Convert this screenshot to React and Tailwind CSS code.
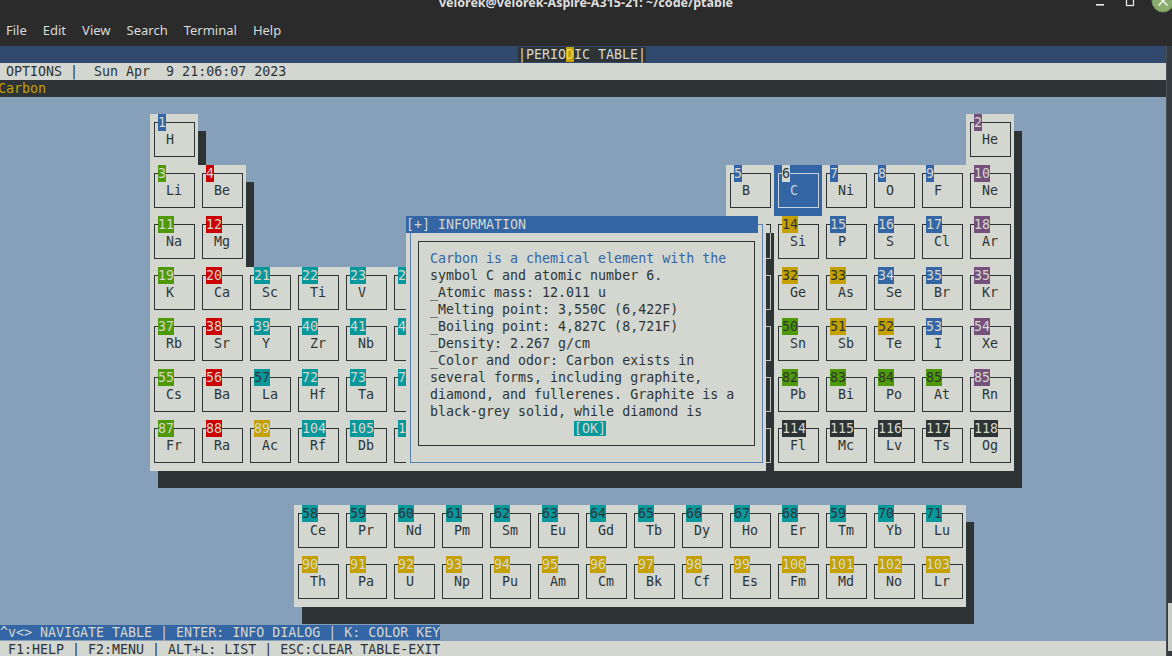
import React from "react";

const B = "#3465a4";
const G = "#4e9a06";
const R = "#cc0000";
const T = "#06989a";
const Y = "#c4a000";
const P = "#75507b";
const K = "#2e3436";
const L = "#d3d7cf";
const D = "#2e3436";

// [label, symbol, group, period, label bg, label text]
const table = [
  ["1", "H", 1, 1, B, L],
  ["2", "He", 18, 1, P, L],
  ["3", "Li", 1, 2, G, L],
  ["4", "Be", 2, 2, R, L],
  ["5", "B", 13, 2, B, L],
  ["7", "Ni", 15, 2, B, L],
  ["8", "O", 16, 2, B, L],
  ["9", "F", 17, 2, B, L],
  ["10", "Ne", 18, 2, P, L],
  ["11", "Na", 1, 3, G, L],
  ["12", "Mg", 2, 3, R, L],
  ["13", "Al", 13, 3, Y, D],
  ["14", "Si", 14, 3, Y, D],
  ["15", "P", 15, 3, B, L],
  ["16", "S", 16, 3, B, L],
  ["17", "Cl", 17, 3, B, L],
  ["18", "Ar", 18, 3, P, L],
  ["19", "K", 1, 4, G, L],
  ["20", "Ca", 2, 4, R, L],
  ["21", "Sc", 3, 4, T, L],
  ["22", "Ti", 4, 4, T, L],
  ["23", "V", 5, 4, T, L],
  ["24", "Cr", 6, 4, T, L],
  ["31", "Ga", 13, 4, G, D],
  ["32", "Ge", 14, 4, Y, D],
  ["33", "As", 15, 4, Y, D],
  ["34", "Se", 16, 4, B, L],
  ["35", "Br", 17, 4, B, L],
  ["35", "Kr", 18, 4, P, L],
  ["37", "Rb", 1, 5, G, L],
  ["38", "Sr", 2, 5, R, L],
  ["39", "Y", 3, 5, T, L],
  ["40", "Zr", 4, 5, T, L],
  ["41", "Nb", 5, 5, T, L],
  ["42", "Mo", 6, 5, T, L],
  ["49", "In", 13, 5, G, D],
  ["50", "Sn", 14, 5, G, D],
  ["51", "Sb", 15, 5, Y, D],
  ["52", "Te", 16, 5, Y, D],
  ["53", "I", 17, 5, B, L],
  ["54", "Xe", 18, 5, P, L],
  ["55", "Cs", 1, 6, G, L],
  ["56", "Ba", 2, 6, R, L],
  ["57", "La", 3, 6, T, D],
  ["72", "Hf", 4, 6, T, L],
  ["73", "Ta", 5, 6, T, L],
  ["74", "W", 6, 6, T, L],
  ["81", "Tl", 13, 6, G, D],
  ["82", "Pb", 14, 6, G, D],
  ["83", "Bi", 15, 6, G, D],
  ["84", "Po", 16, 6, G, D],
  ["85", "At", 17, 6, G, D],
  ["85", "Rn", 18, 6, P, L],
  ["87", "Fr", 1, 7, G, L],
  ["88", "Ra", 2, 7, R, L],
  ["89", "Ac", 3, 7, Y, L],
  ["104", "Rf", 4, 7, T, L],
  ["105", "Db", 5, 7, T, L],
  ["106", "Sg", 6, 7, T, L],
  ["113", "Nh", 13, 7, K, L],
  ["114", "Fl", 14, 7, K, L],
  ["115", "Mc", 15, 7, K, L],
  ["116", "Lv", 16, 7, K, L],
  ["117", "Ts", 17, 7, K, L],
  ["118", "Og", 18, 7, K, L],
];

const lanthanides = [
  ["58", "Ce"], ["59", "Pr"], ["60", "Nd"], ["61", "Pm"], ["62", "Sm"], ["63", "Eu"], ["64", "Gd"],
  ["65", "Tb"], ["66", "Dy"], ["67", "Ho"], ["68", "Er"], ["59", "Tm"], ["70", "Yb"], ["71", "Lu"],
];

const actinides = [
  ["90", "Th"], ["91", "Pa"], ["92", "U"], ["93", "Np"], ["94", "Pu"], ["95", "Am"], ["96", "Cm"],
  ["97", "Bk"], ["98", "Cf"], ["99", "Es"], ["100", "Fm"], ["101", "Md"], ["102", "No"], ["103", "Lr"],
];

const info = [
  "symbol C and atomic number 6.",
  "_Atomic mass: 12.011 u",
  "_Melting point: 3,550C (6,422F)",
  "_Boiling point: 4,827C (8,721F)",
  "_Density: 2.267 g/cm",
  "_Color and odor: Carbon exists in",
  "several forms, including graphite,",
  "diamond, and fullerenes. Graphite is a",
  "black-grey solid, while diamond is",
];

function Element({ label, sym, col, row, bg, fg }) {
  return (
    <div
      className="relative"
      style={{ gridColumn: `${col + 1} / span 6`, gridRow: `${row + 1} / span 3` }}
    >
      <div className="ml-[4px] mt-[8px] h-[35px] w-[41px] border border-[#2e3436] pl-[11px] pt-[8px] text-[#2e3436]">
        {sym}
      </div>
      <span className="absolute left-[8px] top-0 h-[17px]" style={{ backgroundColor: bg, color: fg }}>
        {label}
      </span>
    </div>
  );
}

function TitleBar() {
  return (
    <div className="flex h-[18px] overflow-hidden">
      <div className="flex-1" />
      <div className="-mt-[4px] font-['Noto_Sans',sans-serif] text-[12.5px] font-bold leading-[13px] text-[#dedede]">
        velorek@velorek-Aspire-A315-21: ~/code/ptable
      </div>
      <div className="flex flex-1 justify-end">
        <svg width="80" height="18" viewBox="0 0 80 18">
          <rect x="4" y="4" width="8" height="1.6" fill="#e6e6e6" />
          <rect x="34.5" y="-3" width="7" height="8.5" fill="none" stroke="#e6e6e6" strokeWidth="1.3" />
          <circle cx="71" cy="1" r="11" fill="#8aac6c" stroke="#6f8f55" strokeWidth="1" />
          <path d="M66.5 -3.5 L75.5 5.5 M75.5 -3.5 L66.5 5.5" stroke="#eef3e8" strokeWidth="1.6" />
        </svg>
      </div>
    </div>
  );
}

function MenuBar() {
  return (
    <div className="flex h-[26px] items-center gap-[16px] pl-[6px] font-['Noto_Sans',sans-serif] text-[13px] text-[#dadada]">
      <span>File</span>
      <span>Edit</span>
      <span>View</span>
      <span>Search</span>
      <span>Terminal</span>
      <span>Help</span>
    </div>
  );
}

export default function App() {
  return (
    <div className="h-[656px] w-[1172px] overflow-hidden bg-[#2b2b2b]">
      <TitleBar />
      <MenuBar />
      <div className="h-[2px]" />
      <div className="flex">
        <div className="-ml-[2px] grid w-[1168px] grid-cols-[repeat(146,8px)] grid-rows-[repeat(36,17px)] whitespace-pre font-['DejaVu_Sans_Mono',monospace] text-[13.3px] leading-[17px]">
          {/* header rows */}
          <div className="col-[1/-1] row-[1/2] bg-[#30496c] pl-[520px] text-[#d3d7cf]">
            <span className="bg-[#2e3436]">
              |PERIO<span className="bg-[#c4a000] text-[#e8d56a]">D</span>IC TABLE|
            </span>
          </div>
          <div className="col-[1/-1] row-[2/3] bg-[#d3d7cf] text-[#2e3436]">
            {" OPTIONS |  Sun Apr  9 21:06:07 2023"}
          </div>
          <div className="col-[1/-1] row-[3/4] bg-[#2e3436] text-[#c4a000]">Carbon</div>

          {/* desktop */}
          <div className="col-[1/-1] row-[4/36] bg-[#86a0ba]" />

          {/* table panels */}
          <div className="col-[20/26] row-[5/8] bg-[#d3d7cf]" />
          <div className="col-[20/32] row-[8/14] bg-[#d3d7cf]" />
          <div className="col-[20/128] row-[14/26] bg-[#d3d7cf]" />
          <div className="col-[122/128] row-[5/8] bg-[#d3d7cf]" />
          <div className="col-[92/128] row-[8/14] bg-[#d3d7cf]" />
          <div className="col-[26/27] row-[6/8] bg-[#2e3436]" />
          <div className="col-[32/33] row-[9/14] bg-[#2e3436]" />
          <div className="col-[128/129] row-[6/27] bg-[#2e3436]" />
          <div className="col-[21/128] row-[26/27] bg-[#2e3436]" />

          {/* f-block panel */}
          <div className="col-[38/122] row-[28/34] bg-[#d3d7cf]" />
          <div className="col-[122/123] row-[29/35] bg-[#2e3436]" />
          <div className="col-[39/122] row-[34/35] bg-[#2e3436]" />

          {table.map(([label, sym, g, p, bg, fg]) => (
            <Element
              key={sym}
              label={label}
              sym={sym}
              col={19 + (g - 1) * 6}
              row={4 + (p - 1) * 3}
              bg={bg}
              fg={fg}
            />
          ))}

          {/* selected: carbon */}
          <div className="relative col-[98/104] row-[8/11] bg-[#3465a4]">
            <div className="ml-[4px] mt-[8px] h-[35px] w-[41px] border border-[#c9d3e0] pl-[11px] pt-[8px] text-[#c9d3e0]">
              C
            </div>
            <span className="absolute left-[8px] top-0 h-[17px] bg-[#d3d7cf] text-[#2e3436]">6</span>
          </div>

          {lanthanides.map(([label, sym], i) => (
            <Element key={sym} label={label} sym={sym} col={37 + i * 6} row={27} bg={T} fg={D} />
          ))}
          {actinides.map(([label, sym], i) => (
            <Element key={sym} label={label} sym={sym} col={37 + i * 6} row={30} bg={Y} fg={L} />
          ))}

          {/* information dialog */}
          <div className="relative z-10 col-[52/97] row-[11/26] bg-[#d3d7cf]">
            <div className="ml-[4px] mt-[8px] h-[239px] w-[353px] border border-[#5a80b0] pl-[7px] pt-[16px]">
              <div className="h-[205px] w-[337px] border border-[#2e3436] pl-[11px] pt-[8px] text-[#2e3436]">
                <div className="text-[#3465a4]">Carbon is a chemical element with the</div>
                {info.map((line) => (
                  <div key={line}>{line}</div>
                ))}
                <div className="pl-[144px]">
                  <span className="bg-[#06989a] text-[#d3d7cf]">[OK]</span>
                </div>
              </div>
            </div>
            <div className="absolute left-0 top-0 h-[17px] w-[352px] bg-[#3465a4] text-[#d3d7cf]">
              [+] INFORMATION
            </div>
          </div>
          <div className="relative z-10 col-[97/98] row-[12/26] flex flex-col gap-[16px] bg-[#2e3436]">
            <div className="h-[26px] w-[5px] border-b border-r border-[#c4c8c0]" />
            <div className="h-[35px] w-[5px] border-y border-r border-[#c4c8c0]" />
            <div className="h-[35px] w-[5px] border-y border-r border-[#c4c8c0]" />
            <div className="h-[35px] w-[5px] border-y border-r border-[#c4c8c0]" />
            <div className="h-[35px] w-[5px] border-y border-r border-[#c4c8c0]" />
          </div>

          {/* status rows */}
          <div className="col-[1/-1] row-[35/36] pl-[2px]">
            <span className="bg-[#3465a4] text-[#d3d7cf]">^v&lt;&gt; NAVIGATE TABLE | ENTER: INFO DIALOG | K: COLOR KEY</span>
          </div>
          <div className="col-[1/-1] row-[36/37] bg-[#d3d7cf] pl-[2px] text-[#2e3436]">
            {" F1:HELP | F2:MENU | ALT+L: LIST | ESC:CLEAR TABLE-EXIT"}
          </div>
        </div>
        <div className="flex h-[611px] flex-1 flex-col justify-end border-l border-[#4a5056] bg-[#363b3f]">
          <div className="mb-[6px] ml-auto h-[48px] w-[4px] bg-[#c9ccc6]" />
        </div>
      </div>
    </div>
  );
}
